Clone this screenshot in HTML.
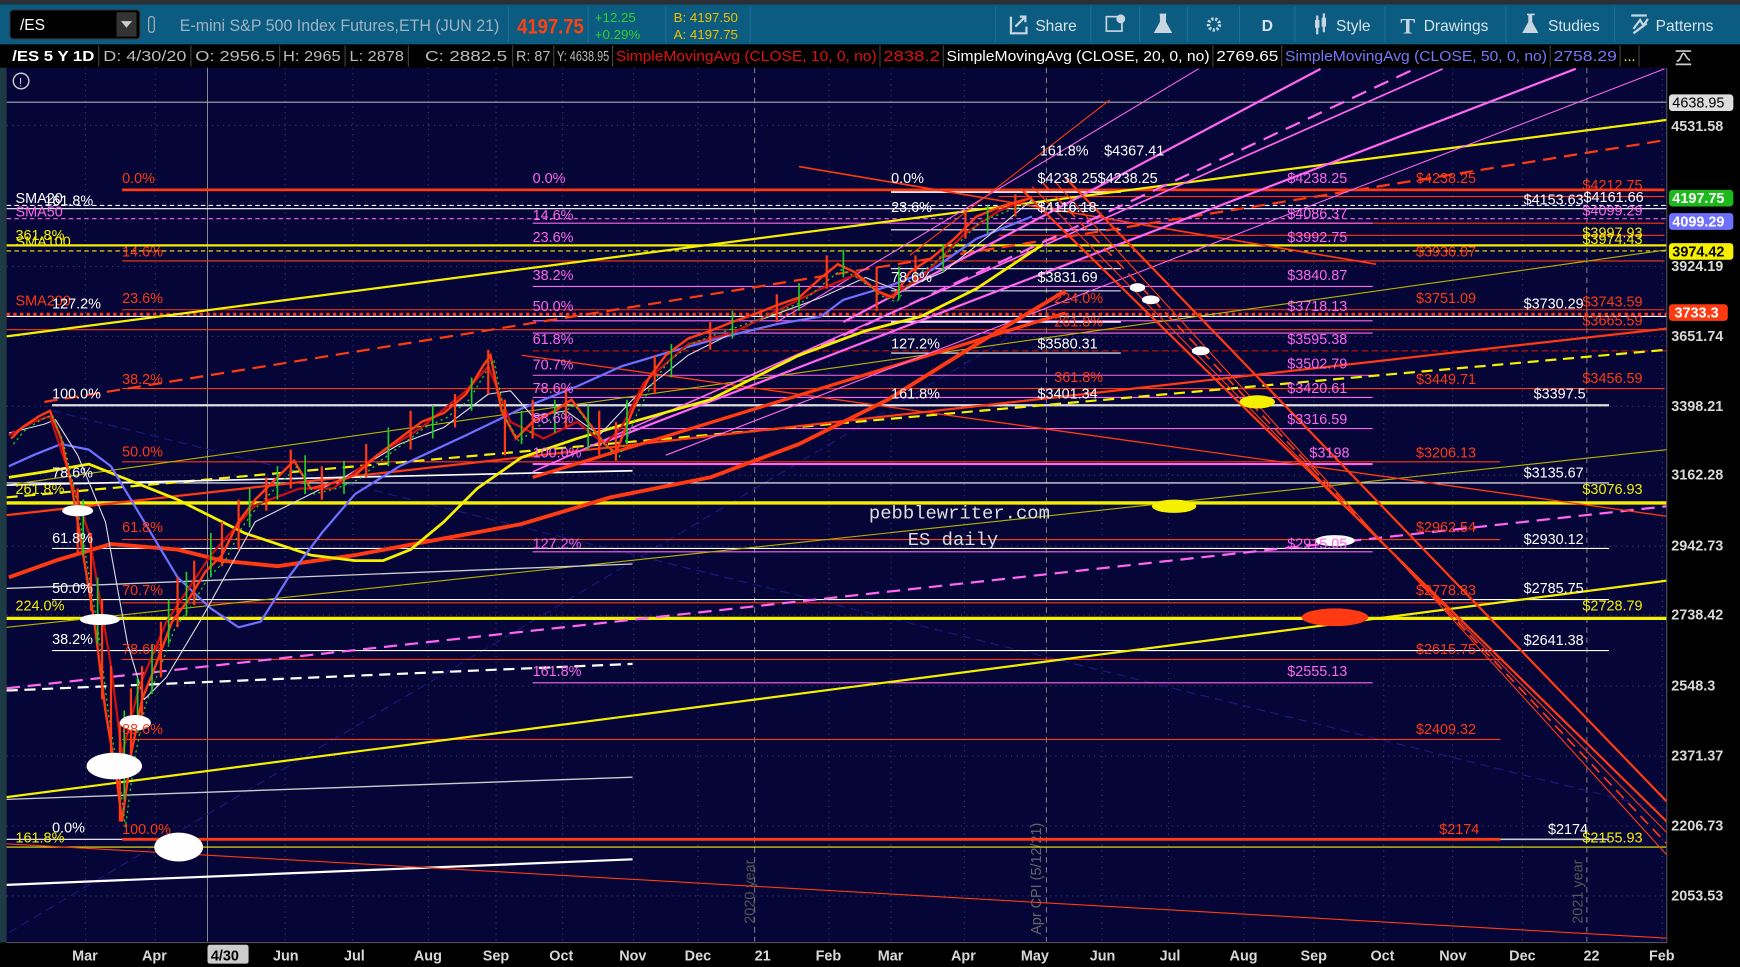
<!DOCTYPE html>
<html><head><meta charset="utf-8"><style>
html,body{margin:0;padding:0;background:#000;width:1740px;height:967px;overflow:hidden}
svg{display:block}
text{font-family:"Liberation Sans Narrow","Liberation Sans",sans-serif;font-size:13px}
.w{fill:#fff}.r{fill:#ff3a12}.p{fill:#ff66ee}.y{fill:#f4f000}
.ax{fill:#d8d8d8;font-weight:bold;font-family:"Liberation Sans",sans-serif;font-size:13px}
.tb{fill:#d6e4ee;font-family:"Liberation Sans",sans-serif;font-size:14px}
.ir{font-size:13px;font-family:"Liberation Sans",sans-serif}
</style></head><body>
<svg width="1740" height="967" viewBox="0 0 1568 871" preserveAspectRatio="none" xmlns="http://www.w3.org/2000/svg">
<rect width="1568" height="871" fill="#000"/>
<rect x="0" y="0" width="1568" height="4" fill="#2a3036"/>
<rect x="0" y="4" width="1568" height="36" fill="#0c5b80"/>
<rect x="9" y="9" width="117" height="26" rx="3" fill="#000" stroke="#333"/>
<text x="18" y="27" fill="#fff" style="font-size:14px">/ES</text>
<rect x="105" y="11" width="18" height="22" fill="#333"/>
<path d="M109 19h10l-5 6z" fill="#ccc"/>
<rect x="134" y="15" width="5" height="14" rx="2" fill="none" stroke="#bbb"/>
<text x="162" y="28" fill="#9fb4c4" style="font-size:15px" textLength="288" lengthAdjust="spacingAndGlyphs">E-mini S&amp;P 500 Index Futures,ETH (JUN 21)</text>
<line x1="458" y1="6" x2="458" y2="38" stroke="#1f7096"/>
<text x="466" y="30" fill="#ff4010" style="font-size:19px;font-weight:bold" textLength="60" lengthAdjust="spacingAndGlyphs">4197.75</text>
<line x1="530" y1="6" x2="530" y2="38" stroke="#1f7096"/>
<text x="536" y="20" fill="#2ed02e" style="font-size:12px">+12.25</text>
<text x="536" y="35" fill="#2ed02e" style="font-size:12px">+0.29%</text>
<line x1="600" y1="6" x2="600" y2="38" stroke="#1f7096"/>
<text x="607" y="20" fill="#f0c000" style="font-size:12px">B: 4197.50</text>
<text x="607" y="35" fill="#f0c000" style="font-size:12px">A: 4197.75</text>
<line x1="676" y1="6" x2="676" y2="38" stroke="#1f7096"/>
<g stroke="#1f7096">
<line x1="897" y1="6" x2="897" y2="38"/><line x1="983" y1="6" x2="983" y2="38"/><line x1="1027" y1="6" x2="1027" y2="38"/><line x1="1070" y1="6" x2="1070" y2="38"/><line x1="1117" y1="6" x2="1117" y2="38"/><line x1="1167" y1="6" x2="1167" y2="38"/><line x1="1248" y1="6" x2="1248" y2="38"/><line x1="1357" y1="6" x2="1357" y2="38"/><line x1="1455" y1="6" x2="1455" y2="38"/></g>
<path d="M911 15v15h14v-6" fill="none" stroke="#c8d6e0" stroke-width="2"/><path d="M915 24l8-8M919 15h5v5" fill="none" stroke="#c8d6e0" stroke-width="2"/>
<text x="933" y="28" class="tb">Share</text>
<rect x="997" y="15" width="14" height="13" fill="none" stroke="#c8d6e0" stroke-width="1.5"/><circle cx="1010" cy="17" r="4" fill="#c8d6e0"/>
<path d="M1045 13h6M1046 13v7l-5 9h14l-5-9v-7" fill="#c8d6e0" stroke="#c8d6e0" stroke-width="1.5"/>
<circle cx="1094" cy="22" r="5" fill="none" stroke="#c8d6e0" stroke-width="3" stroke-dasharray="2 1.5"/>
<text x="1137" y="28" class="tb" style="font-weight:bold">D</text>
<path d="M1187 14v17M1193 12v17" stroke="#c8d6e0" stroke-width="2"/><rect x="1185" y="18" width="4" height="7" fill="#c8d6e0"/><rect x="1191" y="16" width="4" height="8" fill="#c8d6e0"/>
<text x="1204" y="28" class="tb">Style</text>
<text x="1262" y="30" fill="#c8d6e0" style="font-size:20px;font-family:'Liberation Serif',serif;font-weight:bold">T</text>
<text x="1283" y="28" class="tb">Drawings</text>
<path d="M1376 13h7M1378 13v7l-5 9h12l-5-9v-7" fill="#c8d6e0" stroke="#c8d6e0" stroke-width="1.5"/>
<text x="1395" y="28" class="tb">Studies</text>
<path d="M1470 14h14M1472 30l12-9M1472 26l6-8 3 5 4-6" fill="none" stroke="#c8d6e0" stroke-width="2"/>
<text x="1492" y="28" class="tb">Patterns</text>
<!-- info row -->
<rect x="0" y="40" width="1568" height="21" fill="#000"/>
<g stroke="#444">
<line x1="89" y1="41" x2="89" y2="60"/><line x1="172" y1="41" x2="172" y2="60"/><line x1="252" y1="41" x2="252" y2="60"/><line x1="311" y1="41" x2="311" y2="60"/><line x1="368" y1="41" x2="368" y2="60"/><line x1="462" y1="41" x2="462" y2="60"/><line x1="499" y1="41" x2="499" y2="60"/><line x1="552" y1="41" x2="552" y2="60"/><line x1="793" y1="41" x2="793" y2="60"/><line x1="850" y1="41" x2="850" y2="60"/><line x1="1093" y1="41" x2="1093" y2="60"/><line x1="1155" y1="41" x2="1155" y2="60"/><line x1="1397" y1="41" x2="1397" y2="60"/><line x1="1460" y1="41" x2="1460" y2="60"/><line x1="1477" y1="41" x2="1477" y2="60"/></g>
<text x="11" y="55" fill="#fff" class="ir" style="font-weight:bold" textLength="74" lengthAdjust="spacingAndGlyphs">/ES 5 Y 1D</text>
<text x="93" y="55" fill="#bbb" class="ir" textLength="75" lengthAdjust="spacingAndGlyphs">D: 4/30/20</text>
<text x="176" y="55" fill="#bbb" class="ir" textLength="72" lengthAdjust="spacingAndGlyphs">O: 2956.5</text>
<text x="255" y="55" fill="#bbb" class="ir" textLength="52" lengthAdjust="spacingAndGlyphs">H: 2965</text>
<text x="315" y="55" fill="#bbb" class="ir" textLength="49" lengthAdjust="spacingAndGlyphs">L: 2878</text>
<text x="383" y="55" fill="#bbb" class="ir" textLength="74" lengthAdjust="spacingAndGlyphs">C: 2882.5</text>
<text x="465" y="55" fill="#bbb" class="ir" textLength="31" lengthAdjust="spacingAndGlyphs">R: 87</text>
<text x="502" y="55" fill="#bbb" class="ir" textLength="47" lengthAdjust="spacingAndGlyphs">Y: 4638.95</text>
<text x="555" y="55" fill="#e01010" class="ir" textLength="235" lengthAdjust="spacingAndGlyphs">SimpleMovingAvg (CLOSE, 10, 0, no)</text>
<text x="796" y="55" fill="#e01010" class="ir" textLength="51" lengthAdjust="spacingAndGlyphs">2838.2</text>
<text x="853" y="55" fill="#fff" class="ir" textLength="237" lengthAdjust="spacingAndGlyphs">SimpleMovingAvg (CLOSE, 20, 0, no)</text>
<text x="1096" y="55" fill="#fff" class="ir" textLength="56" lengthAdjust="spacingAndGlyphs">2769.65</text>
<text x="1158" y="55" fill="#7777ff" class="ir" textLength="236" lengthAdjust="spacingAndGlyphs">SimpleMovingAvg (CLOSE, 50, 0, no)</text>
<text x="1400" y="55" fill="#7777ff" class="ir" textLength="57" lengthAdjust="spacingAndGlyphs">2758.29</text>
<text x="1463" y="55" fill="#ff0" class="ir">...</text>
<path d="M1510 46h14M1510 58h14M1511 55c4 0 4-7 6-7s3 6 6 6" fill="none" stroke="#ccc" stroke-width="1.5"/>
<!-- chart bg -->
<rect x="6" y="61" width="1496" height="788" fill="#050538"/>
<rect x="0" y="61" width="6" height="788" fill="#1e3a44"/>
<circle cx="19" cy="73" r="7" fill="none" stroke="#ccc" stroke-width="1.3"/><text x="17" y="78" fill="#ccc" style="font-size:11px">!</text>
<g stroke="#3a3a6a" stroke-dasharray="1 4">
<line x1="77" y1="61" x2="77" y2="848"/><line x1="140" y1="61" x2="140" y2="848"/><line x1="257" y1="61" x2="257" y2="848"/><line x1="318" y1="61" x2="318" y2="848"/><line x1="386" y1="61" x2="386" y2="848"/><line x1="447" y1="61" x2="447" y2="848"/><line x1="507" y1="61" x2="507" y2="848"/><line x1="571" y1="61" x2="571" y2="848"/><line x1="629" y1="61" x2="629" y2="848"/><line x1="747" y1="61" x2="747" y2="848"/><line x1="803" y1="61" x2="803" y2="848"/><line x1="869" y1="61" x2="869" y2="848"/><line x1="993" y1="61" x2="993" y2="848"/><line x1="1053" y1="61" x2="1053" y2="848"/><line x1="1121" y1="61" x2="1121" y2="848"/><line x1="1184" y1="61" x2="1184" y2="848"/><line x1="1247" y1="61" x2="1247" y2="848"/><line x1="1309" y1="61" x2="1309" y2="848"/><line x1="1372" y1="61" x2="1372" y2="848"/><line x1="1498" y1="61" x2="1498" y2="848"/>
<line x1="6" y1="113" x2="1502" y2="113"/><line x1="6" y1="240" x2="1502" y2="240"/><line x1="6" y1="303" x2="1502" y2="303"/><line x1="6" y1="366" x2="1502" y2="366"/><line x1="6" y1="428" x2="1502" y2="428"/><line x1="6" y1="492" x2="1502" y2="492"/><line x1="6" y1="554" x2="1502" y2="554"/><line x1="6" y1="618" x2="1502" y2="618"/><line x1="6" y1="681" x2="1502" y2="681"/><line x1="6" y1="744" x2="1502" y2="744"/><line x1="6" y1="807" x2="1502" y2="807"/></g>
<g stroke="#777" stroke-dasharray="5 4"><line x1="680" y1="61" x2="680" y2="848"/><line x1="943" y1="61" x2="943" y2="848"/><line x1="1430" y1="61" x2="1430" y2="848"/></g>
<line x1="187" y1="61" x2="187" y2="848" stroke="#999" stroke-width="0.8"/>
<text transform="translate(680,832) rotate(-90)" fill="#555" style="font-size:13px">2020 year</text>
<text transform="translate(938,842) rotate(-90)" fill="#666" style="font-size:13px">Apr CPI (5/12/21)</text>
<text transform="translate(1426,832) rotate(-90)" fill="#555" style="font-size:13px">2021 year</text>
<g stroke="#1a1a80" stroke-width="1" stroke-dasharray="8 5"><line x1="47" y1="370" x2="1502" y2="730"/><line x1="8" y1="840" x2="1000" y2="250"/></g>
<g fill="none">
<line x1="6" y1="92" x2="1502" y2="92" stroke="#aaa"/>
<line x1="110" y1="171" x2="1500" y2="171" stroke="#ff3a12" stroke-width="2.5"/>
<line x1="803" y1="173" x2="1010" y2="173" stroke="#fff" stroke-width="1.5"/>
<line x1="6" y1="185" x2="1502" y2="185" stroke="#fff" stroke-dasharray="4 3"/>
<line x1="6" y1="188" x2="1502" y2="188" stroke="#fff"/>
<line x1="900" y1="177" x2="1500" y2="177" stroke="#ff3a12"/>
<line x1="6" y1="197" x2="1502" y2="197" stroke="#ff66ee" stroke-dasharray="4 3"/>
<line x1="900" y1="201" x2="1500" y2="201" stroke="#ff3a12"/>
<line x1="480" y1="201" x2="1237" y2="201" stroke="#ff66ee"/>
<line x1="803" y1="207" x2="1010" y2="207" stroke="#fff"/>
<line x1="900" y1="212" x2="1500" y2="212" stroke="#ff3a12"/>
<line x1="6" y1="221" x2="1502" y2="221" stroke="#f4f000" stroke-width="2"/>
<line x1="6" y1="226" x2="1502" y2="226" stroke="#f4f000" stroke-dasharray="4 3"/>
<line x1="110" y1="235" x2="1500" y2="235" stroke="#ff3a12"/>
<line x1="803" y1="242" x2="1010" y2="242" stroke="#fff"/>
<line x1="480" y1="258" x2="1237" y2="258" stroke="#ff66ee"/>
<line x1="803" y1="262" x2="1010" y2="262" stroke="#fff"/>
<line x1="110" y1="279" x2="1500" y2="279" stroke="#ff3a12"/>
<line x1="6" y1="283" x2="1502" y2="283" stroke="#ff3a12" stroke-width="2.5" stroke-dasharray="3 3"/>
<line x1="6" y1="285" x2="1502" y2="285" stroke="#fff"/>
<line x1="480" y1="289" x2="1237" y2="289" stroke="#ff66ee"/>
<line x1="803" y1="290" x2="1010" y2="290" stroke="#fff" stroke-width="1.5"/>
<line x1="6" y1="297" x2="1502" y2="297" stroke="#ff3a12"/>
<line x1="480" y1="300" x2="1237" y2="300" stroke="#ff66ee"/>
<line x1="803" y1="318" x2="1010" y2="318" stroke="#fff"/>
<line x1="480" y1="316" x2="1502" y2="316" stroke="#8b1010" stroke-dasharray="6 3" stroke-width="1.5"/>
<line x1="480" y1="338" x2="1237" y2="338" stroke="#ff66ee"/>
<line x1="110" y1="350" x2="1500" y2="350" stroke="#ff3a12"/>
<line x1="480" y1="358" x2="1237" y2="358" stroke="#ff66ee"/>
<line x1="47" y1="365" x2="1450" y2="365" stroke="#ddd" stroke-width="2"/>
<line x1="480" y1="386" x2="1237" y2="386" stroke="#ff66ee"/>
<line x1="110" y1="416" x2="1352" y2="416" stroke="#ff3a12"/>
<line x1="480" y1="418" x2="1237" y2="418" stroke="#ff66ee" stroke-width="2"/>
<line x1="6" y1="435" x2="1450" y2="435" stroke="#fff"/>
<line x1="6" y1="453" x2="1502" y2="453" stroke="#f4f000" stroke-width="3"/>
<line x1="110" y1="486" x2="1352" y2="486" stroke="#ff3a12"/>
<line x1="47" y1="494" x2="1450" y2="494" stroke="#fff"/>
<line x1="480" y1="497" x2="1237" y2="497" stroke="#ff66ee"/>
<line x1="47" y1="540" x2="1450" y2="540" stroke="#fff"/>
<line x1="110" y1="543" x2="1352" y2="543" stroke="#ff3a12"/>
<line x1="6" y1="557" x2="1502" y2="557" stroke="#f4f000" stroke-width="3"/>
<line x1="47" y1="586" x2="1450" y2="586" stroke="#fff"/>
<line x1="110" y1="594" x2="1352" y2="594" stroke="#ff3a12"/>
<line x1="480" y1="615" x2="1237" y2="615" stroke="#ff66ee"/>
<line x1="110" y1="666" x2="1352" y2="666" stroke="#ff3a12"/>
<line x1="6" y1="756" x2="110" y2="756" stroke="#fff"/>
<line x1="110" y1="756" x2="1352" y2="756" stroke="#ff3a12" stroke-width="2.5"/>
<line x1="1352" y1="756" x2="1450" y2="756" stroke="#ccc" stroke-width="1.5"/>
<line x1="6" y1="763" x2="1502" y2="763" stroke="#f4f000"/>
</g>
<g fill="none">
<line x1="6" y1="303" x2="1502" y2="108" stroke="#f4f000" stroke-width="2"/>
<line x1="6" y1="718" x2="1502" y2="523" stroke="#f4f000" stroke-width="2"/>
<line x1="6" y1="437" x2="1502" y2="225" stroke="#b8b400" stroke-width="1"/>
<line x1="6" y1="565" x2="1502" y2="405" stroke="#b8b400" stroke-width="1"/>
<line x1="6" y1="448" x2="1502" y2="315" stroke="#f4f000" stroke-width="2" stroke-dasharray="10 6"/>
<line x1="6" y1="464" x2="1502" y2="296" stroke="#ff3a12" stroke-width="2"/>
<line x1="40" y1="362" x2="1502" y2="126" stroke="#ff3a12" stroke-width="2" stroke-dasharray="12 7"/>
<line x1="6" y1="620" x2="1502" y2="456" stroke="#ff66ee" stroke-width="2" stroke-dasharray="12 7"/>
<line x1="6" y1="622" x2="570" y2="598" stroke="#fff" stroke-width="2" stroke-dasharray="10 6"/>
<line x1="6" y1="720" x2="570" y2="700" stroke="#ccc" stroke-width="1.2"/>
<line x1="6" y1="797" x2="570" y2="774" stroke="#fff" stroke-width="2"/>
<line x1="6" y1="530" x2="570" y2="508" stroke="#ccc" stroke-width="1.2"/>
<line x1="6" y1="437" x2="570" y2="424" stroke="#fff" stroke-width="1.5"/>
<line x1="6" y1="760" x2="1502" y2="845" stroke="#ff3a12" stroke-width="1"/>
<line x1="470" y1="320" x2="1502" y2="465" stroke="#ff3a12" stroke-width="1.2"/>
<line x1="720" y1="150" x2="1240" y2="238" stroke="#ff3a12" stroke-width="1.5"/>
<line x1="480" y1="430" x2="960" y2="282" stroke="#ff3a12" stroke-width="3"/>
<line x1="540" y1="400" x2="1420" y2="62" stroke="#ff66ee" stroke-width="2"/>
<line x1="480" y1="425" x2="1300" y2="62" stroke="#ff66ee" stroke-width="1.5"/>
<line x1="600" y1="410" x2="1500" y2="62" stroke="#ff66ee" stroke-width="1"/>
<line x1="700" y1="330" x2="1275" y2="62" stroke="#ff66ee" stroke-width="2" stroke-dasharray="14 8"/>
<line x1="700" y1="290" x2="1080" y2="62" stroke="#ff66ee" stroke-width="1"/>
<line x1="760" y1="290" x2="1190" y2="62" stroke="#ff66ee" stroke-width="2"/>
<line x1="820" y1="230" x2="1000" y2="90" stroke="#ff3a12" stroke-width="1"/>
<line x1="920" y1="170" x2="1502" y2="740" stroke="#ff3a12" stroke-width="2"/>
<line x1="930" y1="168" x2="1502" y2="750" stroke="#ff3a12" stroke-width="1"/>
<line x1="940" y1="165" x2="1502" y2="760" stroke="#ff3a12" stroke-width="1.5" stroke-dasharray="10 6"/>
<line x1="950" y1="163" x2="1502" y2="770" stroke="#ff3a12" stroke-width="1"/>
<line x1="960" y1="160" x2="1502" y2="722" stroke="#ff3a12" stroke-width="2"/>
</g>
<g fill="none" stroke-linejoin="round">
<polyline points="8,520 50,505 100,490 160,495 200,505 250,510 320,500 400,485 470,472 550,448 640,430 720,400 800,360 880,310 960,262" stroke="#ff3a12" stroke-width="3.5"/>
<polyline points="8,430 40,425 80,418 110,430 160,450 220,480 280,500 320,505 345,505 370,495 400,470 430,440 470,412 520,395 570,380 640,360 720,320 780,298 830,285 880,260 940,220" stroke="#f4f000" stroke-width="2.5"/>
<polyline points="8,420 30,410 55,400 80,405 100,420 130,470 160,520 190,548 215,565 235,560 260,520 290,480 320,445 360,420 420,392 470,368 520,348 560,330 600,318 650,304 700,292 740,285 760,270 800,258 840,243 880,215 930,195" stroke="#7070ff" stroke-width="2"/>
<polyline points="8,390 40,382 50,378 70,410 95,470 115,580 130,630 150,610 180,560 230,470 270,450 310,430 360,400 400,385 440,355 460,352 480,375 510,370 540,392 570,360 620,320 680,290 740,268 780,250 810,262 850,245 900,205 930,180" stroke="#ddd" stroke-width="1"/>
<polyline points="8,392 30,380 45,375 60,420 80,480 100,600 110,680 125,620 150,560 190,500 230,455 270,440 300,440 340,410 380,385 420,352 440,330 460,380 490,395 520,380 545,400 560,385 580,345 620,310 660,300 700,280 740,260 770,248 800,268 830,250 870,210 900,190 930,178" stroke="#cc1010" stroke-width="2"/>
</g>
<g fill="none" stroke-width="2.2">
<polyline points="10,395 20,385 35,375 45,370 55,395 65,440 75,500 85,560 95,640 105,700 110,740 118,680 128,630 140,600 155,560 170,540 185,515 200,500 215,470 230,450 250,430 265,415 280,440 300,435 320,428 340,410 360,395 380,380 400,372 420,355 435,330 442,320 452,370 465,395 480,380 500,370 515,360 530,380 545,400 555,408 570,370 585,340 600,320 620,305 640,298 660,290 680,283 700,275 720,268 740,250 755,238 770,245 790,262 805,268 820,245 840,232 860,215 880,195 905,185 930,178" stroke="#ff3a12"/>
<polyline points="12,400 22,388 37,378 47,374 57,398 68,445 78,505 88,565 98,645 108,705 113,745 121,685 131,635 143,605 158,565 173,545 188,520 203,505 218,475 233,455 253,435 268,420 283,445 303,440 323,432 343,415 363,400 383,385 403,376 423,360 438,335 445,324 455,375 468,398 483,385 503,374 518,365 533,385 548,404 558,412 573,375 588,345 603,325 623,310 643,302 663,295 683,288 703,280 723,272 743,255 758,243 773,250 793,266 808,272 823,250 843,236 863,220 883,200 908,190 932,182" stroke="#22cc22" stroke-width="1.2" stroke-dasharray="2 3"/>
</g>
<g stroke="#ff3a12" stroke-width="2">
<path d="M70 440v60M82 480v70M92 540v90M100 600v90M108 650v90M118 620v60M128 600v50M145 560v50M160 520v45M175 505v40M200 470v40M215 450v45M240 430v30M262 405v35M290 420v30M330 400v30M370 370v35M410 355v30M440 315v40M455 360v50M480 360v35M510 350v35M540 370v40M555 380v35M590 320v35M640 290v25M700 265v25M745 230v30M790 240v40M825 230v25M870 190v25M915 175v20"/>
</g>
<g stroke="#22cc22" stroke-width="1.5">
<path d="M75 450v50M88 520v60M112 640v80M124 610v50M137 580v45M152 540v40M168 515v40M190 480v40M225 440v35M250 420v30M275 410v35M310 415v30M350 385v35M390 365v30M425 340v30M470 370v30M500 360v30M530 365v40M565 360v40M605 310v30M660 280v25M720 255v25M760 225v25M810 240v30M850 220v25M890 185v25"/>
</g>
<ellipse cx="103" cy="690" rx="25" ry="12" fill="#fff"/>
<ellipse cx="161" cy="763" rx="22" ry="13" fill="#fff"/>
<ellipse cx="122" cy="651" rx="14" ry="7" fill="#fff"/>
<ellipse cx="90" cy="558" rx="18" ry="5" fill="#fff"/>
<ellipse cx="70" cy="460" rx="14" ry="5" fill="#fff"/>
<ellipse cx="1058" cy="456" rx="20" ry="6" fill="#f4f000"/>
<ellipse cx="1133" cy="362" rx="16" ry="6" fill="#f4f000"/>
<ellipse cx="1203" cy="556" rx="30" ry="8" fill="#ff3a12"/>
<ellipse cx="1203" cy="487" rx="18" ry="5" fill="#fff"/>
<ellipse cx="1082" cy="316" rx="8" ry="4" fill="#fff"/>
<ellipse cx="1037" cy="270" rx="8" ry="4" fill="#fff"/>
<ellipse cx="1025" cy="259" rx="7" ry="4" fill="#fff"/>
<g>
<text x="937" y="140" class="w">161.8%</text><text x="995" y="140" class="w">$4367.41</text>
<text x="803" y="165" class="w">0.0%</text><text x="935" y="165" class="w">$4238.25$4238.25</text>
<text x="803" y="191" class="w">23.6%</text><text x="935" y="191" class="w">$4116.18</text>
<text x="803" y="254" class="w">78.6%</text><text x="935" y="254" class="w">$3831.69</text>
<text x="803" y="314" class="w">127.2%</text><text x="935" y="314" class="w">$3580.31</text>
<text x="803" y="359" class="w">161.8%</text><text x="935" y="359" class="w">$3401.34</text>
<text x="47" y="359" class="w">100.0%</text>
<text x="1373" y="184" class="w">$4153.63</text><text x="1427" y="182" class="w">$4161.66</text>
<text x="1373" y="278" class="w">$3730.29</text>
<text x="1382" y="359" class="w">$3397.5</text>
<text x="1373" y="430" class="w">$3135.67</text>
<text x="1373" y="490" class="w">$2930.12</text>
<text x="1373" y="534" class="w">$2785.75</text>
<text x="1373" y="581" class="w">$2641.38</text>
<text x="1395" y="751" class="w">$2174</text>
<text x="1426" y="445" class="y">$3076.93</text>
<text x="1426" y="550" class="y">$2728.79</text>
<text x="1426" y="759" class="y">$2155.93</text>
<text x="1426" y="214" class="y">$3997.93</text>
<text x="1426" y="220" class="y">$3974.43</text>
<text x="1160" y="165" class="p">$4238.25</text>
<text x="1160" y="197" class="p">$4086.37</text>
<text x="1160" y="218" class="p">$3992.75</text>
<text x="1160" y="252" class="p">$3840.87</text>
<text x="1160" y="280" class="p">$3718.13</text>
<text x="1160" y="310" class="p">$3595.38</text>
<text x="1160" y="332" class="p">$3502.79</text>
<text x="1160" y="354" class="p">$3420.61</text>
<text x="1160" y="382" class="p">$3316.59</text>
<text x="1180" y="412" class="p">$3198</text>
<text x="1160" y="494" class="p">$2915.05</text>
<text x="1160" y="609" class="p">$2555.13</text>
<text x="1426" y="194" class="p">$4099.29</text>
<text x="480" y="165" class="p">0.0%</text><text x="480" y="198" class="p">14.6%</text><text x="480" y="218" class="p">23.6%</text><text x="480" y="252" class="p">38.2%</text><text x="480" y="280" class="p">50.0%</text><text x="480" y="310" class="p">61.8%</text><text x="480" y="333" class="p">70.7%</text><text x="480" y="354" class="p">78.6%</text><text x="480" y="381" class="p">88.6%</text><text x="480" y="412" class="p">100.0%</text><text x="480" y="494" class="p">127.2%</text><text x="480" y="609" class="p">161.8%</text>
<text x="14" y="195" class="p">SMA50</text>
<text x="1276" y="165" class="r">$4238.25</text>
<text x="1276" y="231" class="r">$3936.87</text>
<text x="1276" y="273" class="r">$3751.09</text>
<text x="1276" y="346" class="r">$3449.71</text>
<text x="1276" y="412" class="r">$3206.13</text>
<text x="1276" y="479" class="r">$2962.54</text>
<text x="1276" y="536" class="r">$2778.83</text>
<text x="1276" y="589" class="r">$2615.75</text>
<text x="1276" y="661" class="r">$2409.32</text>
<text x="1297" y="751" class="r">$2174</text>
<text x="1426" y="171" class="r">$4212.75</text>
<text x="1426" y="276" class="r">$3743.59</text>
<text x="1426" y="293" class="r">$3665.59</text>
<text x="1426" y="345" class="r">$3456.59</text>
<text x="110" y="165" class="r">0.0%</text><text x="110" y="231" class="r">14.6%</text><text x="110" y="273" class="r">23.6%</text><text x="110" y="346" class="r">38.2%</text><text x="110" y="411" class="r">50.0%</text><text x="110" y="479" class="r">61.8%</text><text x="110" y="536" class="r">70.7%</text><text x="110" y="589" class="r">78.6%</text><text x="110" y="661" class="r">88.6%</text><text x="110" y="751" class="r">100.0%</text>
<text x="14" y="275" class="r">SMA200</text>
<text x="950" y="273" class="r">224.0%</text><text x="950" y="294" class="r">261.8%</text><text x="950" y="344" class="r">361.8%</text>
<text x="14" y="183" class="w">SMA20</text><text x="40" y="185" class="w">161.8%</text>
<text x="47" y="278" class="w">127.2%</text>
<text x="47" y="430" class="w">78.6%</text>
<text x="47" y="489" class="w">61.8%</text>
<text x="47" y="534" class="w">50.0%</text>
<text x="47" y="580" class="w">38.2%</text>
<text x="47" y="750" class="w">0.0%</text>
<text x="14" y="216" class="y">361.8%</text><text x="14" y="222" class="y">SMA100</text>
<text x="14" y="445" class="y">261.8%</text>
<text x="14" y="550" class="y">224.0%</text>
<text x="14" y="759" class="y">161.8%</text>
</g>
<text x="783" y="467" fill="#ddd" style="font-family:'Liberation Mono',monospace;font-size:17px">pebblewriter.com</text>
<text x="818" y="491" fill="#ddd" style="font-family:'Liberation Mono',monospace;font-size:17px">ES daily</text>
<rect x="1502" y="61" width="66" height="810" fill="#000"/>
<line x1="1502" y1="61" x2="1502" y2="849" stroke="#555"/>
<rect x="1504" y="85" width="58" height="15" rx="3" fill="#ddd"/><text x="1507" y="97" fill="#000" style="font-family:'Liberation Sans',sans-serif;font-size:13px">4638.95</text>
<text x="1506" y="118" class="ax">4531.58</text>
<rect x="1504" y="171" width="58" height="15" rx="3" fill="#1cb81c"/><text x="1507" y="183" fill="#fff" style="font-family:'Liberation Sans',sans-serif;font-size:13px;font-weight:bold">4197.75</text>
<rect x="1504" y="192" width="58" height="15" rx="3" fill="#7070ff"/><text x="1507" y="204" fill="#fff" style="font-family:'Liberation Sans',sans-serif;font-size:13px;font-weight:bold">4099.29</text>
<rect x="1504" y="219" width="58" height="15" rx="3" fill="#f4f000"/><text x="1507" y="231" fill="#000" style="font-family:'Liberation Sans',sans-serif;font-size:13px;font-weight:bold">3974.42</text>
<text x="1506" y="244" class="ax">3924.19</text>
<rect x="1504" y="274" width="53" height="15" rx="3" fill="#ff3a12"/><text x="1509" y="286" fill="#fff" style="font-family:'Liberation Sans',sans-serif;font-size:13px;font-weight:bold">3733.3</text>
<text x="1506" y="307" class="ax">3651.74</text>
<text x="1506" y="370" class="ax">3398.21</text>
<text x="1506" y="432" class="ax">3162.28</text>
<text x="1506" y="496" class="ax">2942.73</text>
<text x="1506" y="558" class="ax">2738.42</text>
<text x="1506" y="622" class="ax">2548.3</text>
<text x="1506" y="685" class="ax">2371.37</text>
<text x="1506" y="748" class="ax">2206.73</text>
<text x="1506" y="811" class="ax">2053.53</text>
<rect x="0" y="849" width="1568" height="22" fill="#000"/>
<line x1="6" y1="849" x2="1502" y2="849" stroke="#555"/>
<rect x="187" y="851" width="37" height="17" rx="2" fill="#ccc"/>
<g>
<text x="65" y="865" class="ax">Mar</text><text x="128" y="865" class="ax">Apr</text><text x="190" y="865" fill="#000" style="font-family:'Liberation Sans',sans-serif;font-size:13px;font-weight:bold">4/30</text><text x="246" y="865" class="ax">Jun</text><text x="310" y="865" class="ax">Jul</text><text x="373" y="865" class="ax">Aug</text><text x="435" y="865" class="ax">Sep</text><text x="495" y="865" class="ax">Oct</text><text x="558" y="865" class="ax">Nov</text><text x="617" y="865" class="ax">Dec</text><text x="680" y="865" class="ax">21</text><text x="735" y="865" class="ax">Feb</text><text x="791" y="865" class="ax">Mar</text><text x="857" y="865" class="ax">Apr</text><text x="920" y="865" class="ax">May</text><text x="982" y="865" class="ax">Jun</text><text x="1045" y="865" class="ax">Jul</text><text x="1108" y="865" class="ax">Aug</text><text x="1172" y="865" class="ax">Sep</text><text x="1235" y="865" class="ax">Oct</text><text x="1297" y="865" class="ax">Nov</text><text x="1360" y="865" class="ax">Dec</text><text x="1427" y="865" class="ax">22</text><text x="1486" y="865" class="ax">Feb</text>
</g>
</svg>
</body></html>
